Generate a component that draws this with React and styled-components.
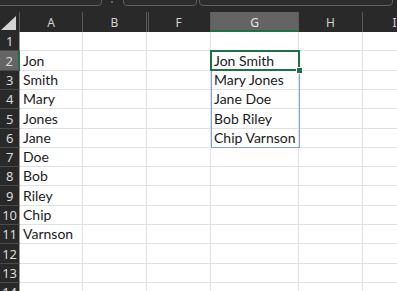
import styled, { createGlobalStyle, css } from 'styled-components';

const GlobalStyle = createGlobalStyle`
  body {
    margin: 0;
    background: #ffffff;
    overflow: hidden;
  }
`

const GREEN = '#1e7145'
const HEAD_BG = '#292929'
const HEAD_SEL = '#646464'

const columns = [
  { key: 'A', width: 63 },
  { key: 'B', width: 64 },
  { key: 'F', width: 64, hiddenBefore: true },
  { key: 'G', width: 88, selected: true },
  { key: 'H', width: 64 },
  { key: 'I', width: 64 }
]

const rowHeights = [19, 20, 19, 19, 20, 19, 19, 19, 20, 19, 19, 20, 19, 19]

const colA = ['', 'Jon', 'Smith', 'Mary', 'Jones', 'Jane', 'Doe', 'Bob', 'Riley', 'Chip', 'Varnson']
const colG = ['', 'Jon Smith', 'Mary Jones', 'Jane Doe', 'Bob Riley', 'Chip Varnson']

const Frame = styled.div`
  width: 397px;
  height: 291px;
  overflow: hidden;
  background: #fff;
  font-family: Lato, "Open Sans", sans-serif;
`

const TopBar = styled.div`
  height: 12px;
  background: ${HEAD_BG};
  display: flex;
  align-items: flex-end;
  overflow: hidden;
  padding-bottom: 6px;
  box-sizing: border-box;
`

const Box = styled.div`
  flex: none;
  height: 22px;
  border: 1px solid #5f5f5f;
  border-radius: 4px;
  box-sizing: border-box;
  background: #2c2c2c;
  margin-left: ${p => p.$gap}px;
  width: ${p => p.$width}px;
`

const Grip = styled.div`
  flex: none;
  margin-left: 9px;
  width: 2px;
  height: 2px;
  border-radius: 1px;
  background: #777;
  align-self: flex-start;
  margin-top: 1px;
`

const Sheet = styled.div`
  position: relative;
`

const HeaderRow = styled.div`
  display: flex;
  height: 20px;
  background: ${HEAD_BG};
`

const Corner = styled.div`
  flex: none;
  width: 20px;
  height: 20px;
  position: relative;
  box-sizing: border-box;
  border-right: 1px solid #5a5a5a;

  &::after {
    content: '';
    position: absolute;
    right: 3px;
    bottom: 2px;
    width: 0;
    height: 0;
    border-left: 15px solid transparent;
    border-bottom: 14px solid #d4d4d4;
  }
`

const ColHead = styled.div`
  flex: none;
  width: ${p => p.$width}px;
  box-sizing: border-box;
  border-right: 1px solid #5a5a5a;
  display: flex;
  align-items: center;
  justify-content: center;
  color: #d2d2d2;
  font-family: "Noto Sans", sans-serif;
  font-size: 12px;
  padding-top: 1px;
  ${p => p.$hiddenBefore && css`
    box-shadow: inset 1px 0 0 ${HEAD_BG}, inset 2px 0 0 #5a5a5a;
  `}
  ${p => p.$selected && css`
    background: ${HEAD_SEL};
    color: #e6e6e6;
    border-bottom: 2px solid ${GREEN};
    padding-top: 3px;
  `}
`

const Row = styled.div`
  display: flex;
  height: ${p => p.$height}px;
`

const RowHead = styled.div`
  flex: none;
  width: 20px;
  box-sizing: border-box;
  background: ${p => (p.$selected ? HEAD_SEL : HEAD_BG)};
  border-bottom: 1px solid #4a4a4a;
  border-right: ${p => (p.$selected ? `2px solid ${GREEN}` : '1px solid #9a9a9a')};
  color: #dcdcdc;
  font-family: "Noto Sans", sans-serif;
  font-size: 13px;
  display: flex;
  align-items: center;
  justify-content: center;
  letter-spacing: -0.3px;
`

const Cell = styled.div`
  flex: none;
  width: ${p => p.$width}px;
  box-sizing: border-box;
  border-right: 1px solid #e1e1e1;
  border-bottom: 1px solid #e1e1e1;
  display: flex;
  align-items: flex-end;
  padding: 0 3px 2px;
  color: #1a1a1a;
  font-size: 14px;
  line-height: 14px;
  white-space: nowrap;
  overflow: visible;
`

const Selection = styled.div`
  position: absolute;
  box-sizing: border-box;
  pointer-events: none;
  left: ${p => p.$x}px;
  top: ${p => p.$y}px;
  width: ${p => p.$w}px;
  height: ${p => p.$h}px;
  border: ${p => p.$border};
`

const FillHandle = styled.div`
  position: absolute;
  left: ${p => p.$x}px;
  top: ${p => p.$y}px;
  width: 5px;
  height: 5px;
  background: ${GREEN};
  border: 1px solid #fff;
  box-sizing: content-box;
`

export default function App () {
  let top = 20
  const rowTops = rowHeights.map(h => {
    const t = top
    top += h
    return t
  })
  const gLeft = 211
  const gWidth = 89

  return (
    <>
      <GlobalStyle />
      <Frame>
        <TopBar>
          <Box $gap={-6} $width={108} />
          <Grip />
          <Box $gap={10} $width={74} />
          <Box $gap={2} $width={194} />
        </TopBar>
        <Sheet>
          <HeaderRow>
            <Corner />
            {columns.map(c => (
              <ColHead
                key={c.key}
                $width={c.width}
                $hiddenBefore={c.hiddenBefore}
                $selected={c.selected}
              >
                {c.key}
              </ColHead>
            ))}
          </HeaderRow>
          {rowHeights.map((h, i) => (
            <Row key={i} $height={h}>
              <RowHead $selected={i === 1}>{i + 1}</RowHead>
              {columns.map(c => (
                <Cell key={c.key} $width={c.width}>
                  {c.key === 'A' && colA[i]}
                  {c.key === 'G' && colG[i]}
                </Cell>
              ))}
            </Row>
          ))}
          <Selection
            $x={gLeft}
            $y={rowTops[2] - 1}
            $w={gWidth}
            $h={rowTops[6] - rowTops[2] + 1}
            $border='1px solid #7ea3de'
          />
          <Selection
            $x={gLeft - 1}
            $y={rowTops[1] - 1}
            $w={gWidth + 1}
            $h={rowHeights[1] + 1}
            $border={`2px solid ${GREEN}`}
          />
          <FillHandle $x={gLeft + gWidth - 4} $y={rowTops[2] - 4} />
        </Sheet>
      </Frame>
    </>
  )
}
